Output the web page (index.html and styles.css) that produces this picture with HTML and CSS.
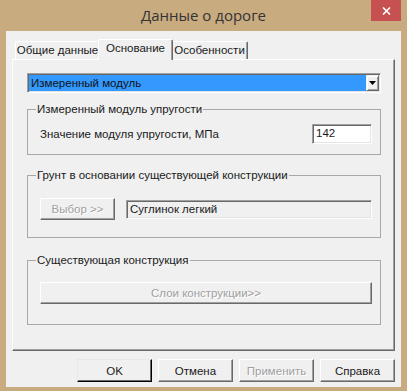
FILE: index.html
```html
<!DOCTYPE html>
<html lang="ru">
<head>
<meta charset="utf-8">
<title>Данные о дороге</title>
<link rel="stylesheet" href="styles.css">
</head>
<body>
<div class="window">
  <div class="titlebar">
    <div class="title">Данные о дороге</div>
    <div class="close">
      <svg width="9" height="8" viewBox="0 0 9 8"><path d="M1 0.5 L8 7.5 M8 0.5 L1 7.5" stroke="#fff" stroke-width="1.6" fill="none"/></svg>
    </div>
  </div>
  <div class="client">
    <div class="tabs">
      <div class="tab tab-general">Общие данные</div>
      <div class="tab tab-base active">Основание</div>
      <div class="tab tab-features">Особенности</div>
    </div>
    <div class="panel">
      <div class="combo">
        <div class="combo-value">Измеренный модуль</div>
        <div class="combo-btn">
          <svg width="7" height="4" viewBox="0 0 7 4"><path d="M0 0 H7 L3.5 4 Z" fill="#000"/></svg>
        </div>
      </div>

      <fieldset class="group group-modulus">
        <legend>Измеренный модуль упругости</legend>
        <div class="group-body row-modulus">
          <span class="label">Значение модуля упругости, МПа</span>
          <div class="field field-white field-value">142</div>
        </div>
      </fieldset>

      <fieldset class="group group-soil">
        <legend>Грунт в основании существующей конструкции</legend>
        <div class="group-body row-soil">
          <div class="btn disabled btn-choose">Выбор &gt;&gt;</div>
          <div class="field field-grey field-soil">Суглинок легкий</div>
        </div>
      </fieldset>

      <fieldset class="group group-existing">
        <legend>Существующая конструкция</legend>
        <div class="group-body row-layers">
          <div class="btn disabled btn-wide">Слои конструкции&gt;&gt;</div>
        </div>
      </fieldset>
    </div>
    <div class="buttons">
      <div class="btn btn-default">OK</div>
      <div class="btn">Отмена</div>
      <div class="btn disabled">Применить</div>
      <div class="btn">Справка</div>
    </div>
  </div>
</div>
</body>
</html>
```

FILE: styles.css
```css
html, body {
  margin: 0;
  padding: 0;
}
body {
  background: #c9ab80;
  font-family: "Liberation Sans", Arial, sans-serif;
  font-size: 11.5px;
  color: #1a1a1a;
}
.window {
  width: 407px;
  height: 391px;
  box-sizing: border-box;
  padding: 0 6px 4px 6px;
  display: flex;
  flex-direction: column;
  background: #c9ab80;
}
.titlebar {
  height: 31px;
  flex: none;
  display: grid;
  grid-template-columns: 1fr auto 1fr;
  align-items: start;
}
.title {
  grid-column: 2;
  font-family: "Open Sans", "Noto Sans", sans-serif;
  font-size: 15px;
  line-height: 20px;
  padding-top: 5px;
  color: #333;
  white-space: nowrap;
}
.close {
  grid-column: 3;
  justify-self: end;
  width: 30px;
  height: 21px;
  background: #c75050;
  display: flex;
  align-items: center;
  justify-content: center;
}
.client {
  flex: 1;
  background: #f0f0f0;
  padding: 0 6px;
  display: flex;
  flex-direction: column;
}
.tabs {
  height: 28px;
  flex: none;
  display: flex;
  align-items: flex-end;
  padding-left: 3px;
}
.tab {
  height: 18px;
  box-sizing: border-box;
  border-top: 1px solid #fff;
  border-left: 1px solid #fff;
  border-right: 1px solid #696969;
  box-shadow: inset -1px 0 #a0a0a0;
  border-radius: 2px 2px 0 0;
  line-height: 16px;
  text-align: center;
  white-space: nowrap;
  background: #f0f0f0;
}
.tab-general { width: 85px; }
.tab-features { width: 77px; }
.tab.active {
  width: 75px;
  height: 21px;
  margin: 0 -2px -1px -2px;
  position: relative;
  z-index: 1;
  line-height: 16px;
}
.panel {
  height: 292px;
  flex: none;
  box-sizing: border-box;
  border: 1px solid;
  border-color: #fff #696969 #696969 #fff;
  box-shadow: inset -1px -1px #a0a0a0;
  padding: 13px 13px 0 14px;
}
.combo {
  height: 20px;
  box-sizing: border-box;
  border: 1px solid;
  border-color: #a0a0a0 #fff #fff #a0a0a0;
  box-shadow: inset 1px 1px #696969, inset -1px -1px #e3e3e3;
  background: #fff;
  padding: 1px;
  display: flex;
}
.combo-value {
  flex: 1;
  background: #3399ff;
  color: #111;
  line-height: 16px;
  padding-left: 2px;
}
.combo-btn {
  width: 13px;
  box-sizing: border-box;
  border: 1px solid;
  border-color: #f0f0f0 #696969 #696969 #f0f0f0;
  box-shadow: inset 1px 1px #fff, inset -1px -1px #a0a0a0;
  background: #f0f0f0;
  display: flex;
  align-items: center;
  justify-content: center;
}
.group {
  margin: 0;
  padding: 0;
  border: 1px solid #a8a8a8;
  min-width: 0;
}
.group legend {
  margin-left: 8px;
  padding: 0 1px;
  line-height: 14px;
}
.group-modulus { margin-top: 9px; }
.group-soil { margin-top: 13px; }
.group-existing { margin-top: 15px; }
.group-body {
  display: flex;
  align-items: center;
}
.row-modulus {
  padding: 8px 8px 10px 12px;
  justify-content: space-between;
}
.row-soil {
  padding: 16px 8px 17px 12px;
  gap: 11px;
}
.row-layers {
  padding: 15px 8px 20px 12px;
}
.field {
  box-sizing: border-box;
  border: 1px solid;
  border-color: #a0a0a0 #fff #fff #a0a0a0;
  box-shadow: inset 1px 1px #696969, inset -1px -1px #e3e3e3;
  line-height: 15px;
  padding: 1px 3px;
  white-space: nowrap;
}
.field-white {
  background: #fff;
}
.field-grey {
  background: #f0f0f0;
}
.field-value {
  width: 60px;
  height: 20px;
}
.field-soil {
  flex: 1;
  height: 19px;
}
.btn {
  box-sizing: border-box;
  width: 75px;
  height: 23px;
  border: 1px solid;
  border-color: #fff #696969 #696969 #fff;
  box-shadow: inset -1px -1px #a0a0a0;
  background: #f0f0f0;
  display: flex;
  align-items: center;
  justify-content: center;
  white-space: nowrap;
}
.btn.disabled {
  color: #a0a0a0;
  text-shadow: 1px 1px 0 #fff;
}
.btn-choose {
  height: 22px;
}
.btn-wide {
  flex: 1;
  width: auto;
  height: 22px;
}
.btn-default {
  border-color: #e8e8e8 #000 #000 #e8e8e8;
  box-shadow: inset -1px -1px #696969;
}
.buttons {
  margin-top: 8px;
  display: flex;
  justify-content: flex-end;
  gap: 6px;
}
```
